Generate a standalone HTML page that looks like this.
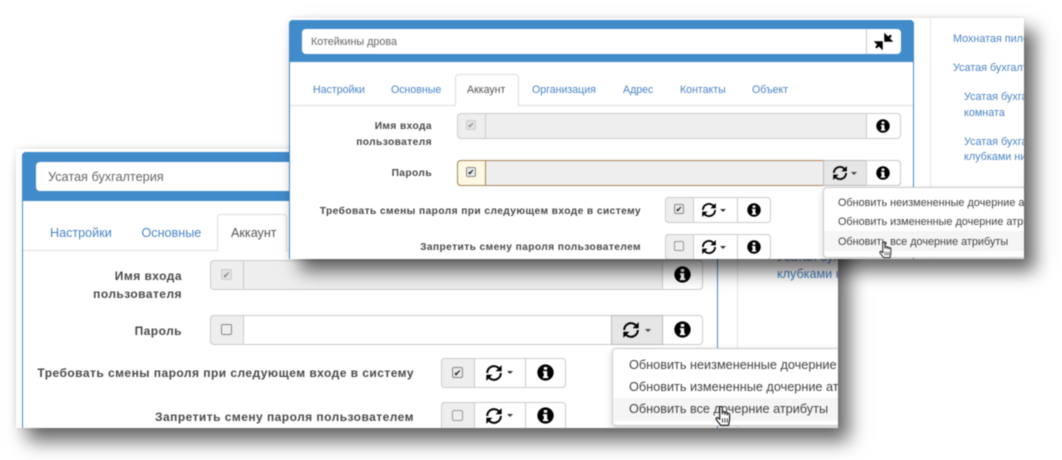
<!DOCTYPE html>
<html lang="ru"><head><meta charset="utf-8"><style>
html,body{margin:0;padding:0;background:#fff}
body{width:1062px;height:460px;overflow:hidden;position:relative;font-family:"Liberation Sans","DejaVu Sans",sans-serif;color:#555}
.win{position:absolute;background:#fff;overflow:hidden}
.shadow{position:absolute}
.a{position:absolute;box-sizing:border-box;white-space:nowrap}
.l{position:absolute;font-weight:bold;text-align:right;color:#4a4a4a;white-space:nowrap}
.link{color:#4a84c4}
svg{position:absolute;overflow:visible}
#blur{position:absolute;left:0;top:0;width:1062px;height:460px;filter:blur(.5px)}
.bl{font-size:12px;line-height:18px;letter-spacing:.46px}
.fl{font-size:10.200px;line-height:15.500px;letter-spacing:.42px}
.bt{font-size:12.600px;top:77px}
.ft{font-size:10.600px;top:66px}
.bd{font-size:12.700px;line-height:18px;color:#444}
.fd{font-size:10.850px;line-height:16px;color:#444}
.fs{font-size:10.800px;line-height:15px}
</style></head><body>
<svg width="0" height="0" style="position:absolute"><defs>
<symbol id="ref" viewBox="0 0 20 20"><path d="M2.400 10a7.600 7.600 0 0 1 13-5.300" fill="none" stroke="#000" stroke-width="2.300"/><path d="M18.500 1.200v6.800h-6.800z" fill="#000"/><path d="M17.600 10a7.600 7.600 0 0 1-13 5.300" fill="none" stroke="#000" stroke-width="2.300"/><path d="M1.500 18.800v-6.800h6.800z" fill="#000"/></symbol>
<symbol id="inf" viewBox="0 0 20 20"><circle cx="10" cy="10" r="9.600" fill="#000"/><path d="M8 3.600h4v3.200H8zM7 8.400h5v6.200h1.200v2H6.900v-2H8v-4.200H7z" fill="#fff"/></symbol>
<symbol id="hand" viewBox="0 0 14 20"><path d="M4 11V2.500a1.200 1.200 0 0 1 2.400 0V8V6.800a1.200 1.200 0 0 1 2.300 0V8.500V7.500a1.150 1.150 0 0 1 2.200 0V9V8.300a1.100 1.100 0 0 1 2.100 0V13.500L12 18.500H5L1 13.500C.2 12.200 1.400 10.800 2.600 11.800L4 13z" fill="#fff" stroke="#222" stroke-width="1.100" stroke-linejoin="round"/><path d="M6.500 12v4M8.700 12v4M10.900 12v4" stroke="#222" stroke-width=".8"/></symbol>
</defs></svg>
<div id="blur">

<!-- BACK WINDOW -->
<div class="shadow" style="left:16px;top:149px;width:822px;height:279px;box-shadow:11px 13px 18px rgba(0,0,0,.6),0 0 6px rgba(0,0,0,.1)"></div>
<div class="win" style="left:16px;top:149px;width:822px;height:279px">
 <div class="a" style="left:6px;top:3px;width:696px;height:290px;border:1px solid #428bca;border-radius:4px 4px 0 0"></div>
 <div class="a" style="left:6px;top:3px;width:696px;height:49px;background:#428bca;border-radius:4px 4px 0 0"></div>
 <div class="a" style="left:20px;top:13px;width:660px;height:29px;background:#fff;border-radius:4px;font-size:12.700px;line-height:30px;padding-left:12px;color:#666">Усатая бухгалтерия</div>
 <div class="a" style="left:721px;top:0;width:1px;height:279px;background:#e4e4e4"></div>
 <div class="a link" style="left:761px;top:100px;font-size:12.600px;line-height:17px">Усатая бухгалтерия<br>клубками ни</div>

 <div class="a" style="left:7px;top:101px;width:694px;height:1px;background:#ddd"></div>
 <div class="a" style="left:201px;top:65px;width:70px;height:37px;background:#fff;border:1px solid #ddd;border-bottom:0;border-radius:4px 4px 0 0"></div>
 <div class="a link bt" style="left:34px">Настройки</div>
 <div class="a link bt" style="left:125.500px">Основные</div>
 <div class="a bt" style="left:215px;color:#555">Аккаунт</div>

 <div class="l bl" style="right:656px;top:118px">Имя входа<br>пользователя</div>
 <div class="a" style="left:194px;top:111px;width:493px;height:30px;background:#eee;border:1px solid #ccc;border-radius:4px"></div>
 <div class="a" style="left:227px;top:111px;width:1px;height:30px;background:#ccc"></div>
 <div class="a" style="left:646px;top:111px;width:41px;height:30px;background:#fff;border:1px solid #ccc;border-radius:0 4px 4px 0"></div>
 <div class="a" style="left:205px;top:120px;width:11px;height:11px;background:#e2e2e2;border:1px solid #ccc;border-radius:2px;font-size:9px;line-height:10px;text-align:center;color:#888">✔</div>
 <svg style="left:658px;top:117px" width="17" height="17"><use href="#inf"/></svg>

 <div class="l bl" style="right:656px;top:173px">Пароль</div>
 <div class="a" style="left:194px;top:166px;width:493px;height:30px;background:#fff;border:1px solid #ccc;border-radius:4px"></div>
 <div class="a" style="left:194px;top:166px;width:34px;height:30px;background:#eee;border:1px solid #ccc;border-radius:4px 0 0 4px"></div>
 <div class="a" style="left:205px;top:175px;width:11px;height:11px;background:#eee;border:1px solid #888;border-radius:2px"></div>
 <div class="a" style="left:595px;top:166px;width:52px;height:30px;background:#e6e6e6;border:1px solid #bbb"></div>
 <svg style="left:606px;top:172px" width="18" height="18"><use href="#ref"/></svg>
 <div class="a" style="left:629px;top:180px;border:3.500px solid transparent;border-top-color:#444;border-bottom:0"></div>
 <svg style="left:658px;top:172px" width="17" height="17"><use href="#inf"/></svg>

 <div class="l bl" style="right:424px;top:215px">Требовать смены пароля при следующем входе в систему</div>
 <div class="a" style="left:425px;top:209px;width:125px;height:30px;background:#fff;border:1px solid #ccc;border-radius:4px"></div>
 <div class="a" style="left:425px;top:209px;width:34px;height:30px;background:#eee;border:1px solid #ccc;border-radius:4px 0 0 4px"></div>
 <div class="a" style="left:509px;top:209px;width:1px;height:30px;background:#ccc"></div>
 <div class="a" style="left:436px;top:218px;width:11px;height:11px;background:#e8e8e8;border:1px solid #888;border-radius:2px;font-size:9px;line-height:10px;text-align:center;color:#222">✔</div>
 <svg style="left:469px;top:215px" width="18" height="18"><use href="#ref"/></svg>
 <div class="a" style="left:491px;top:222px;border:3.500px solid transparent;border-top-color:#333;border-bottom:0"></div>
 <svg style="left:521px;top:215px" width="17" height="17"><use href="#inf"/></svg>

 <div class="l bl" style="right:424px;top:259px">Запретить смену пароля пользователем</div>
 <div class="a" style="left:425px;top:253px;width:125px;height:30px;background:#fff;border:1px solid #ccc;border-radius:4px"></div>
 <div class="a" style="left:425px;top:253px;width:34px;height:30px;background:#eee;border:1px solid #ccc;border-radius:4px 0 0 4px"></div>
 <div class="a" style="left:509px;top:253px;width:1px;height:30px;background:#ccc"></div>
 <div class="a" style="left:436px;top:261px;width:11px;height:11px;background:#eee;border:1px solid #999;border-radius:2px"></div>
 <svg style="left:469px;top:258px" width="18" height="18"><use href="#ref"/></svg>
 <div class="a" style="left:491px;top:265px;border:3.500px solid transparent;border-top-color:#333;border-bottom:0"></div>
 <svg style="left:521px;top:258px" width="17" height="17"><use href="#inf"/></svg>

 <div class="a" style="left:596px;top:199px;width:240px;height:78px;background:#fff;border:1px solid #ccc;border-radius:4px;box-shadow:0 3px 8px rgba(0,0,0,.18)"></div>
 <div class="a" style="left:597px;top:249px;width:230px;height:23px;background:#f5f5f5"></div>
 <div class="a bd" style="left:613px;top:207px">Обновить неизмененные дочерние атрибуты</div>
 <div class="a bd" style="left:613px;top:229px">Обновить измененные дочерние атрибуты</div>
 <div class="a bd" style="left:613px;top:251px">Обновить все дочерние атрибуты</div>
 <svg style="left:699px;top:256px" width="16" height="22"><use href="#hand"/></svg>
</div>

<!-- FRONT WINDOW -->
<div class="shadow" style="left:289px;top:18px;width:735px;height:241px;box-shadow:11px 12px 17px rgba(0,0,0,.6),0 0 6px rgba(0,0,0,.1)"></div>
<div class="win" style="left:289px;top:18px;width:735px;height:241px">
 <div class="a" style="left:0;top:2px;width:625px;height:260px;border:1px solid #428bca;border-radius:4px 4px 0 0"></div>
 <div class="a" style="left:0;top:2px;width:625px;height:42px;background:#428bca;border-radius:4px 4px 0 0"></div>
 <div class="a" style="left:13px;top:11px;width:599px;height:25px;background:#fff;border-radius:4px;font-size:10.750px;line-height:26px;padding-left:9px;color:#666">Котейкины дрова</div>
 <div class="a" style="left:577px;top:11px;width:1px;height:25px;background:#ccc"></div>
 <svg style="left:586px;top:15px" width="17" height="17" viewBox="0 0 18 18"><path d="M17 2.500L12 7.500M11 2.500v5.500h5.500z" fill="#000" stroke="#000" stroke-width="2.400"/><path d="M1 15.500L6 10.500M7 15.500v-5.500H1.500z" fill="#000" stroke="#000" stroke-width="2.400"/></svg>

 <div class="a" style="left:641px;top:0;width:1px;height:241px;background:#e4e4e4"></div>
 <div class="a link fs" style="left:664px;top:14px">Мохнатая пилорама</div>
 <div class="a link fs" style="left:664px;top:43px">Усатая бухгалтерия</div>
 <div class="a link fs" style="left:675px;top:71px;line-height:16px">Усатая бухгалтерия<br>комната</div>
 <div class="a link fs" style="left:675px;top:116.500px">Усатая бухгалтерия<br>клубками ни</div>

 <div class="a" style="left:1px;top:87px;width:623px;height:1px;background:#ddd"></div>
 <div class="a" style="left:166px;top:56px;width:64px;height:32px;background:#fff;border:1px solid #ddd;border-bottom:0;border-radius:4px 4px 0 0"></div>
 <div class="a link ft" style="left:24px">Настройки</div>
 <div class="a link ft" style="left:102px">Основные</div>
 <div class="a ft" style="left:178px;color:#555">Аккаунт</div>
 <div class="a link ft" style="left:243px">Организация</div>
 <div class="a link ft" style="left:334px">Адрес</div>
 <div class="a link ft" style="left:391px">Контакты</div>
 <div class="a link ft" style="left:463px">Объект</div>

 <div class="l fl" style="right:592px;top:101px">Имя входа<br>пользователя</div>
 <div class="a" style="left:168px;top:95px;width:444px;height:26px;background:#eee;border:1px solid #ccc;border-radius:4px"></div>
 <div class="a" style="left:196px;top:95px;width:1px;height:26px;background:#ccc"></div>
 <div class="a" style="left:577px;top:95px;width:35px;height:26px;background:#fff;border:1px solid #ccc;border-radius:0 4px 4px 0"></div>
 <div class="a" style="left:177px;top:102px;width:10px;height:10px;background:#e2e2e2;border:1px solid #ccc;border-radius:2px;font-size:8px;line-height:9px;text-align:center;color:#888">✔</div>
 <svg style="left:587px;top:101px" width="14" height="14"><use href="#inf"/></svg>

 <div class="l fl" style="right:592px;top:148px">Пароль</div>
 <div class="a" style="left:168px;top:142px;width:444px;height:26px;background:#eee;border:1px solid #a9855a;border-radius:4px"></div>
 <div class="a" style="left:168px;top:142px;width:29px;height:26px;background:#fcf8e3;border:1px solid #a9855a;border-radius:4px 0 0 4px"></div>
 <div class="a" style="left:177px;top:149px;width:10px;height:10px;background:#e8e8e8;border:1px solid #888;border-radius:2px;font-size:8px;line-height:9px;text-align:center;color:#111">✔</div>
 <div class="a" style="left:534px;top:142px;width:44px;height:26px;background:#e6e6e6;border:1px solid #bbb"></div>
 <div class="a" style="left:577px;top:142px;width:35px;height:26px;background:#fff;border:1px solid #ccc;border-radius:0 4px 4px 0"></div>
 <svg style="left:543px;top:147px" width="16" height="16"><use href="#ref"/></svg>
 <div class="a" style="left:562px;top:154px;border:3px solid transparent;border-top-color:#444;border-bottom:0"></div>
 <svg style="left:587px;top:148px" width="14" height="14"><use href="#inf"/></svg>

 <div class="l fl" style="right:383px;top:186px">Требовать смены пароля при следующем входе в систему</div>
 <div class="a" style="left:376px;top:179px;width:106px;height:26px;background:#fff;border:1px solid #ccc;border-radius:4px"></div>
 <div class="a" style="left:376px;top:179px;width:29px;height:26px;background:#eee;border:1px solid #ccc;border-radius:4px 0 0 4px"></div>
 <div class="a" style="left:448px;top:179px;width:1px;height:26px;background:#ccc"></div>
 <div class="a" style="left:385px;top:186px;width:10px;height:10px;background:#e8e8e8;border:1px solid #888;border-radius:2px;font-size:8px;line-height:9px;text-align:center;color:#111">✔</div>
 <svg style="left:412px;top:184px" width="16" height="16"><use href="#ref"/></svg>
 <div class="a" style="left:431px;top:191px;border:3px solid transparent;border-top-color:#333;border-bottom:0"></div>
 <svg style="left:458px;top:185px" width="14" height="14"><use href="#inf"/></svg>

 <div class="l fl" style="right:383px;top:222px">Запретить смену пароля пользователем</div>
 <div class="a" style="left:376px;top:216px;width:106px;height:26px;background:#fff;border:1px solid #ccc;border-radius:4px"></div>
 <div class="a" style="left:376px;top:216px;width:29px;height:26px;background:#eee;border:1px solid #ccc;border-radius:4px 0 0 4px"></div>
 <div class="a" style="left:448px;top:216px;width:1px;height:26px;background:#ccc"></div>
 <div class="a" style="left:385px;top:223px;width:10px;height:10px;background:#eee;border:1px solid #999;border-radius:2px"></div>
 <svg style="left:412px;top:221px" width="16" height="16"><use href="#ref"/></svg>
 <div class="a" style="left:431px;top:228px;border:3px solid transparent;border-top-color:#333;border-bottom:0"></div>
 <svg style="left:458px;top:222px" width="14" height="14"><use href="#inf"/></svg>

 <div class="a" style="left:534px;top:169px;width:240px;height:71px;background:#fff;border:1px solid #ccc;border-radius:4px;box-shadow:0 3px 8px rgba(0,0,0,.18)"></div>
 <div class="a" style="left:535px;top:213px;width:200px;height:20px;background:#f5f5f5"></div>
 <div class="a fd" style="left:549px;top:177px">Обновить неизмененные дочерние атрибуты</div>
 <div class="a fd" style="left:549px;top:196px">Обновить измененные дочерние атрибуты</div>
 <div class="a fd" style="left:549px;top:216px">Обновить все дочерние атрибуты</div>
 <svg style="left:590px;top:223px" width="13" height="18"><use href="#hand"/></svg>
</div>
</div>
</body></html>
